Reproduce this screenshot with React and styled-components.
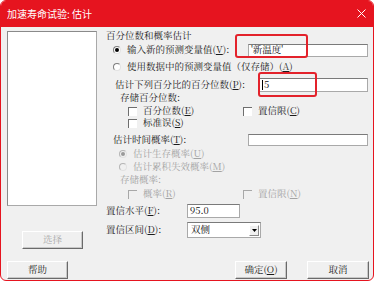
import styled, { createGlobalStyle } from "styled-components";

const GlobalStyle = createGlobalStyle`
  html, body {
    margin: 0;
    padding: 0;
    background: #ffffff;
  }
`;

const UI_FONT = `"Noto Serif CJK SC", "Noto Sans CJK SC", "Liberation Sans", sans-serif`;
const RED = "#e6141f";

export default function App() {
  return (
    <>
      <GlobalStyle />
      <Window>
        <TitleBar>
          <span>加速寿命试验: 估计</span>
          <svg width="9" height="9" viewBox="0 0 9 9">
            <path d="M0.5 0.5 L8.5 8.5 M8.5 0.5 L0.5 8.5" stroke="#fff" strokeWidth="1" />
          </svg>
        </TitleBar>

        <Body>
          <Main>
            <LeftCol>
              <ListBox />
              <Button $w={61} $ml={15} $mt={25} disabled>
                选择
              </Button>
            </LeftCol>

            <RightCol>
              <Row $h={12}>百分位数和概率估计</Row>

              <Row $h={14} $mt={1} $in={7}>
                <Radio $checked />
                <Label>
                  输入新的预测变量值(<u>V</u>):
                </Label>
                <InputWrap>
                  <TextBox $w={120} $h={13}>'新温度'</TextBox>
                  <Mark $left={-13} $top={-10} $w={73} $h={24} />
                </InputWrap>
              </Row>

              <Row $h={14} $mt={3} $in={7}>
                <Radio />
                <Label>
                  使用数据中的预测变量值（仅存储）(<u>A</u>)
                </Label>
              </Row>

              <Row $h={14} $mt={4} $in={9}>
                估计下列百分比的百分位数(<u>P</u>):
                <InputWrap>
                  <TextBox $w={109} $h={14}>
                    <Caret />5
                  </TextBox>
                  <Mark $left={-1} $top={-6} $w={59} $h={25} />
                </InputWrap>
              </Row>

              <Row $h={12} $in={14}>存储百分位数:</Row>

              <Row $h={12} $mt={1} $in={22}>
                <CheckItem $w={115}>
                  <Check />
                  百分位数(<u>E</u>)
                </CheckItem>
                <CheckItem>
                  <Check />
                  置信限(<u>C</u>)
                </CheckItem>
              </Row>

              <Row $h={12} $in={22}>
                <CheckItem>
                  <Check />
                  标准误(<u>S</u>)
                </CheckItem>
              </Row>

              <Row $h={14} $mt={4} $in={7}>
                估计时间概率(<u>T</u>):
                <InputWrap>
                  <TextBox $w={120} $h={12} />
                </InputWrap>
              </Row>

              <Row $h={12} $mt={1} $in={13} $off>
                <Radio $checked $off />
                <Label>
                  估计生存概率(<u>U</u>)
                </Label>
              </Row>

              <Row $h={12} $mt={1} $in={13} $off>
                <Radio $off />
                <Label>
                  估计累积失效概率(<u>M</u>)
                </Label>
              </Row>

              <Row $h={12} $mt={1} $in={14} $off>
                存储概率:
              </Row>

              <Row $h={12} $mt={2} $in={22} $off>
                <CheckItem $w={115}>
                  <Check $off />
                  概率(<u>R</u>)
                </CheckItem>
                <CheckItem>
                  <Check $off />
                  置信限(<u>N</u>)
                </CheckItem>
              </Row>

              <Row $h={14} $mt={4}>
                <FieldLabel>
                  置信水平(<u>F</u>):
                </FieldLabel>
                <TextBox $w={53} $h={14}>95.0</TextBox>
              </Row>

              <Row $h={16} $mt={4}>
                <FieldLabel>
                  置信区间(<u>D</u>):
                </FieldLabel>
                <Select>
                  <span>双侧</span>
                  <DropArrow>
                    <svg width="5" height="3" viewBox="0 0 5 3">
                      <path d="M0 0 H5 L2.5 3 Z" fill="#000" />
                    </svg>
                  </DropArrow>
                </Select>
              </Row>
            </RightCol>
          </Main>

          <Footer>
            <Button $w={61}>帮助</Button>
            <Button $w={52} $ml="auto">
              确定(<u>O</u>)
            </Button>
            <Button $w={62} $ml={20}>
              取消
            </Button>
          </Footer>
        </Body>
      </Window>
    </>
  );
}

const Window = styled.div`
  box-sizing: border-box;
  width: 374px;
  height: 281px;
  border: 1px solid ${RED};
  border-radius: 6px;
  overflow: hidden;
  background: #f0f0f0;
  display: flex;
  flex-direction: column;
  font-family: ${UI_FONT};
  font-size: 9.5px;
  color: #1b1b1b;
`;

const TitleBar = styled.div`
  height: 25px;
  flex-shrink: 0;
  background: ${RED};
  color: #fff;
  display: flex;
  align-items: center;
  justify-content: space-between;
  padding: 0 7px 1px 6px;
  font-family: "Noto Sans CJK SC", sans-serif;
  font-size: 10px;
`;

const Body = styled.div`
  flex: 1;
  display: flex;
  flex-direction: column;
  padding: 3px 4px 0 6px;
`;

const Main = styled.div`
  display: flex;
  gap: 9px;
`;

const LeftCol = styled.div`
  width: 90px;
  display: flex;
  flex-direction: column;
  align-items: flex-start;
  padding-top: 1px;
`;

const ListBox = styled.div`
  box-sizing: border-box;
  width: 90px;
  height: 175px;
  background: #fff;
  border: 1px solid #a9a9a9;
  border-top-color: #8a8a8a;
  border-left-color: #8a8a8a;
`;

const RightCol = styled.div`
  flex: 1;
  display: flex;
  flex-direction: column;
`;

const Row = styled.div`
  display: flex;
  align-items: center;
  height: ${(p) => p.$h}px;
  margin-top: ${(p) => p.$mt || 0}px;
  padding-left: ${(p) => p.$in || 0}px;
  white-space: nowrap;
  line-height: 1;
  color: ${(p) => (p.$off ? "#a3a3a3" : "inherit")};
`;

const Label = styled.span`
  margin-left: 6px;
`;

const FieldLabel = styled.span`
  width: 81px;
`;

const Radio = styled.span`
  box-sizing: border-box;
  width: 8px;
  height: 8px;
  border-radius: 50%;
  border: 1px solid ${(p) => (p.$off ? "#b5b5b5" : "#7d7d7d")};
  border-bottom-color: #e2e2e2;
  border-right-color: #e2e2e2;
  background: ${(p) => (p.$off ? "#f0f0f0" : "#fff")};
  display: flex;
  align-items: center;
  justify-content: center;
  &::after {
    content: "";
    width: 4px;
    height: 4px;
    border-radius: 50%;
    background: ${(p) => (p.$off ? "#9a9a9a" : "#000")};
    display: ${(p) => (p.$checked ? "block" : "none")};
  }
`;

const CheckItem = styled.span`
  display: flex;
  align-items: center;
  width: ${(p) => (p.$w ? `${p.$w}px` : "auto")};
`;

const Check = styled.span`
  box-sizing: border-box;
  width: 9px;
  height: 9px;
  margin-right: 6px;
  background: ${(p) => (p.$off ? "#f0f0f0" : "#fff")};
  border-top: 1px solid ${(p) => (p.$off ? "#a8a8a8" : "#6e6e6e")};
  border-left: 1px solid ${(p) => (p.$off ? "#a8a8a8" : "#6e6e6e")};
`;

const InputWrap = styled.span`
  position: relative;
  margin-left: auto;
  margin-right: 1px;
  display: flex;
`;

const TextBox = styled.span`
  box-sizing: border-box;
  display: flex;
  align-items: center;
  width: ${(p) => p.$w}px;
  height: ${(p) => p.$h}px;
  padding-left: 2px;
  background: #fff;
  border: 1px solid #a9a9a9;
  border-top-color: #7a7a7a;
  color: #111;
`;

const Caret = styled.span`
  width: 1px;
  height: 10px;
  background: #000;
  margin-right: 1px;
`;

const Mark = styled.span`
  position: absolute;
  box-sizing: border-box;
  left: ${(p) => p.$left}px;
  top: ${(p) => p.$top}px;
  width: ${(p) => p.$w}px;
  height: ${(p) => p.$h}px;
  border: 2px solid #e3222b;
  border-radius: 3px;
  pointer-events: none;
`;

const Select = styled.span`
  box-sizing: border-box;
  display: flex;
  align-items: center;
  justify-content: space-between;
  width: 74px;
  height: 16px;
  padding: 0 1px 0 3px;
  background: #fff;
  border: 1px solid #a9a9a9;
  border-top-color: #7a7a7a;
  color: #111;
`;

const DropArrow = styled.span`
  box-sizing: border-box;
  width: 10px;
  height: 11px;
  display: flex;
  align-items: center;
  justify-content: center;
  background: #f0f0f0;
  border: 1px solid #fff;
  border-right-color: #8a8a8a;
  border-bottom-color: #8a8a8a;
`;

const Button = styled.button`
  box-sizing: border-box;
  width: ${(p) => p.$w}px;
  height: 18px;
  margin-top: ${(p) => p.$mt || 0}px;
  margin-left: ${(p) => (p.$ml === "auto" ? "auto" : `${p.$ml || 0}px`)};
  padding: 0;
  background: #f0f0f0;
  border: 1px solid #ffffff;
  border-right-color: #6a6a6a;
  border-bottom-color: #6a6a6a;
  box-shadow: inset -1px -1px 0 #c8c8c8;
  font-family: ${UI_FONT};
  font-size: 9.5px;
  color: #1b1b1b;
  line-height: 1;
  &:disabled {
    color: #a8a8a8;
  }
`;

const Footer = styled.div`
  display: flex;
  align-items: center;
  margin-top: 12px;
`;
